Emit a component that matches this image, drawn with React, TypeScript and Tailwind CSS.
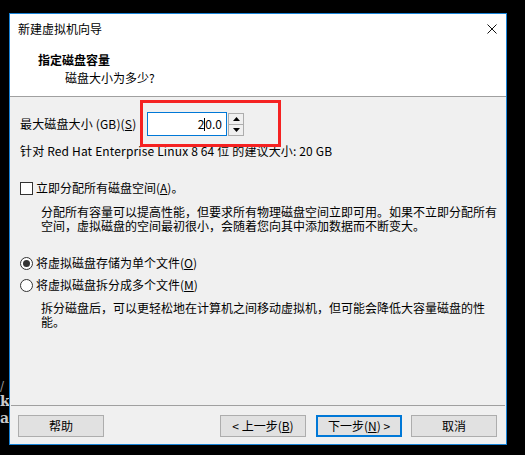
import React from "react";

const font = "font-['Noto_Sans_CJK_SC','Microsoft_YaHei',sans-serif]";

function Btn({ label, primary }: { label: React.ReactNode; primary?: boolean }) {
  return (
    <button
      className={
        "w-[86px] h-[22px] bg-[#e1e1e1] text-[12px] leading-none text-black flex items-center justify-center " +
        (primary ? "border-2 border-[#0078d7]" : "border border-[#adadad]")
      }
    >
      {label}
    </button>
  );
}

export default function App() {
  return (
    <div className={"w-[525px] h-[455px] bg-black relative overflow-hidden pt-[13px] pl-[9px] " + font}>
      {/* bits of the desktop behind the dialog */}
      <span className="absolute left-0 top-[378px] text-[12px] text-[#9a9a9a] font-['DejaVu_Serif',serif]">/</span>
      <span className="absolute left-0 top-[391px] text-[14px] font-bold text-[#c8c8c8] font-['DejaVu_Serif',serif]">k</span>
      <span className="absolute left-0 top-[408px] text-[14px] font-bold text-[#c8c8c8] font-['DejaVu_Serif',serif]">a</span>

      <div className="w-[498px] h-[432px] border border-[#1883d7] bg-[#f0f0f0] flex flex-col relative text-[12px] text-black">
        {/* title bar */}
        <div className="h-[30px] bg-white flex items-center justify-between pl-[8px] pr-[9px]">
          <span>新建虚拟机向导</span>
          <svg width="10" height="10" viewBox="0 0 10 10">
            <path d="M0.5 0.5 L9.5 9.5 M9.5 0.5 L0.5 9.5" stroke="#111" strokeWidth="1" />
          </svg>
        </div>

        {/* header */}
        <div className="h-[53px] bg-white border-b border-[#a0a0a0] pt-[8px]">
          <div className="pl-[28px] h-[16px] leading-[16px] font-bold">指定磁盘容量</div>
          <div className="pl-[55px] mt-[2px] h-[16px] leading-[16px]">磁盘大小为多少?</div>
        </div>

        {/* body */}
        <div className="flex flex-col pl-[10px]">
          <div className="mt-[15px] h-[24px] flex items-center">
            <span className="w-[127px] tracking-[0.15px]">
              最大磁盘大小 (GB)(<span className="underline">S</span>)
            </span>
            <div className="w-[80px] h-[24px] border border-[#0078d7] bg-white flex items-center justify-end pr-[4px]">
              <span>2</span>
              <span className="inline-block w-px h-[13px] bg-black"></span>
              <span>0.0</span>
            </div>
            <div className="ml-[1px] w-[16px] h-[23px] border border-[#adadad] bg-[#f0f0f0] flex flex-col">
              <div className="flex-1 flex items-center justify-center border-b border-[#adadad]">
                <svg width="7" height="4" viewBox="0 0 7 4">
                  <path d="M3.5 0 L7 4 L0 4 Z" fill="#000" />
                </svg>
              </div>
              <div className="flex-1 flex items-center justify-center">
                <svg width="7" height="4" viewBox="0 0 7 4">
                  <path d="M0 0 L7 0 L3.5 4 Z" fill="#000" />
                </svg>
              </div>
            </div>
          </div>

          <div className="mt-[7px] h-[16px] leading-[16px] tracking-[0.15px]">
            针对 Red Hat Enterprise Linux 8 64 位 的建议大小: 20 GB
          </div>

          <div className="mt-[21px] h-[16px] flex items-center">
            <span className="w-[13px] h-[13px] border border-[#333] bg-white"></span>
            <span className="ml-[3px]">
              立即分配所有磁盘空间(<span className="underline">A</span>)。
            </span>
          </div>

          <div className="mt-[9px] pl-[21px] leading-[14px] whitespace-nowrap">
            分配所有容量可以提高性能，但要求所有物理磁盘空间立即可用。如果不立即分配所有
            <br />
            空间，虚拟磁盘的空间最初很小，会随着您向其中添加数据而不断变大。
          </div>

          <div className="mt-[22px] h-[16px] flex items-center">
            <span className="w-[13px] h-[13px] rounded-full border border-[#333] bg-white flex items-center justify-center">
              <span className="w-[7px] h-[7px] rounded-full bg-[#333]"></span>
            </span>
            <span className="ml-[3px]">
              将虚拟磁盘存储为单个文件(<span className="underline">O</span>)
            </span>
          </div>

          <div className="mt-[6px] h-[16px] flex items-center">
            <span className="w-[13px] h-[13px] rounded-full border border-[#333] bg-white"></span>
            <span className="ml-[3px]">
              将虚拟磁盘拆分成多个文件(<span className="underline">M</span>)
            </span>
          </div>

          <div className="mt-[8px] pl-[21px] leading-[14px] whitespace-nowrap">
            拆分磁盘后，可以更轻松地在计算机之间移动虚拟机，但可能会降低大容量磁盘的性
            <br />
            能。
          </div>
        </div>

        {/* footer */}
        <div className="mt-auto border-t border-[#a0a0a0] mx-[1px]"></div>
        <div className="mt-[9px] mb-[7px] flex items-center justify-between pl-[8px] pr-[9px]">
          <Btn label="帮助" />
          <div className="flex items-center">
            <Btn label={<>&lt; 上一步(<span className="underline">B</span>)</>} />
            <div className="ml-[10px]">
              <Btn primary label={<>下一步(<span className="underline">N</span>) &gt;</>} />
            </div>
            <div className="ml-[9px]">
              <Btn label="取消" />
            </div>
          </div>
        </div>

        {/* red annotation box */}
        <div className="absolute left-[130px] top-[86px] w-[141px] h-[47px] border-[3px] border-[#f52222]"></div>
      </div>
    </div>
  );
}
